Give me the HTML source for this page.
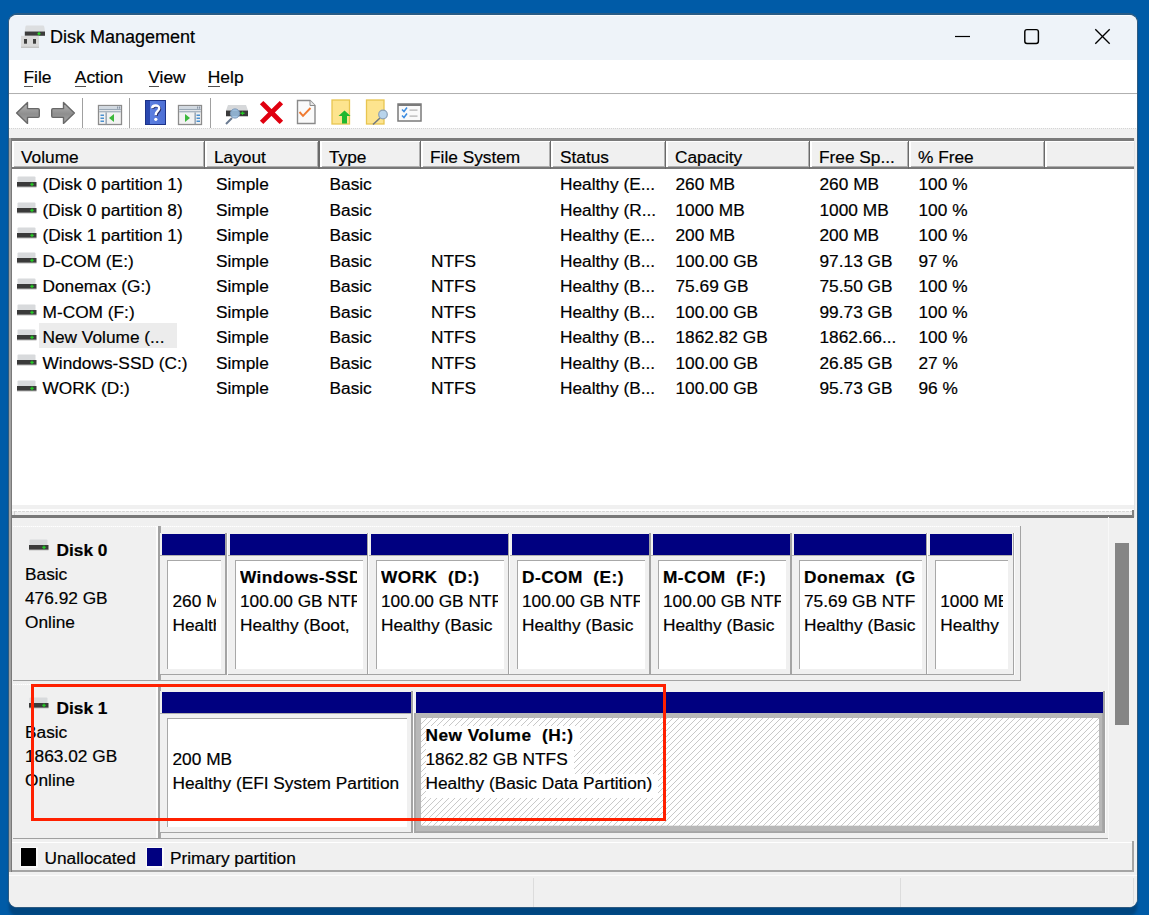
<!DOCTYPE html>
<html><head><meta charset="utf-8"><style>
html,body{margin:0;padding:0;width:1149px;height:915px;overflow:hidden}
body{background:#005ba7;position:relative;font-family:"Liberation Sans", sans-serif}
#win{position:absolute;left:8px;top:13px;width:1128px;height:892px;border:1px solid #2e5a80;border-top:2px solid #2a5c86;border-radius:9px;background:#f0f0f0;box-shadow:0 9px 3px -1px rgba(0,0,0,0.23)}
.t{position:absolute;white-space:nowrap;line-height:1;-webkit-text-stroke:0.2px #000}
</style></head><body>
<div id="win"></div>
<div style="position:absolute;left:9px;top:15px;width:1128px;height:45px;background:linear-gradient(#fbfdff 0 1px,#eef3f9 1px);border-radius:8px 8px 0 0"></div>
<div style="position:absolute;left:9px;top:60px;width:1128px;height:33px;background:#fff"></div>
<div style="position:absolute;left:9px;top:93.2px;width:1128px;height:1.4px;background:#b0b0b0"></div>
<div style="position:absolute;left:9px;top:94px;width:1128px;height:1px;background:#fdfdfd"></div>
<div style="position:absolute;left:9px;top:95px;width:1128px;height:33px;background:#fff"></div>
<div style="position:absolute;left:9px;top:128px;width:1128px;height:1px;background:repeating-linear-gradient(90deg,#d4d4d4 0 1px,#f4f4f4 1px 2px)"></div>
<svg style="position:absolute;left:20px;top:24px" width="27" height="26" viewBox="0 0 27 26"><path d="M6.5 1.6 H23 Q24 1.6 24.3 3 L25 7.6 H4.8 L5.4 3 Q5.6 1.6 6.5 1.6 Z" fill="#dcdee0"/><rect x="4.8" y="7.5" width="20.2" height="4.3" fill="#3c3c3c"/><rect x="17.5" y="9" width="3" height="1.4" fill="#2ad82a"/><rect x="18.4" y="8" width="1.2" height="3.4" fill="#2ad82a"/><rect x="1" y="11.8" width="18" height="12.2" fill="#dadada"/><rect x="1" y="22.6" width="18" height="1.4" fill="#c4c4c4"/><rect x="4" y="15" width="3" height="4.7" fill="#404040"/><rect x="13" y="15" width="3" height="4.7" fill="#404040"/></svg>
<div class="t" style="left:50px;top:28.26px;font-size:18px;font-weight:400;color:#000;">Disk Management</div>
<svg style="position:absolute;left:950px;top:25px" width="170" height="24" viewBox="0 0 170 24"><line x1="5" y1="11.5" x2="20" y2="11.5" stroke="#000" stroke-width="1.2"/><rect x="74.8" y="4.6" width="13.6" height="13.8" rx="2.2" fill="none" stroke="#000" stroke-width="1.45"/><line x1="145.3" y1="4.3" x2="159.7" y2="18.7" stroke="#000" stroke-width="1.3"/><line x1="159.7" y1="4.3" x2="145.3" y2="18.7" stroke="#000" stroke-width="1.3"/></svg>
<div class="t" style="left:23.5px;top:69.27px;font-size:17.4px;font-weight:400;color:#000;">File</div>
<div style="position:absolute;left:24.0px;top:85.6px;width:8.5px;height:1.4px;background:#505050"></div>
<div class="t" style="left:74.8px;top:69.27px;font-size:17.4px;font-weight:400;color:#000;">Action</div>
<div style="position:absolute;left:75.3px;top:85.6px;width:10.5px;height:1.4px;background:#505050"></div>
<div class="t" style="left:148.3px;top:69.27px;font-size:17.4px;font-weight:400;color:#000;">View</div>
<div style="position:absolute;left:148.8px;top:85.6px;width:10.5px;height:1.4px;background:#505050"></div>
<div class="t" style="left:207.8px;top:69.27px;font-size:17.4px;font-weight:400;color:#000;">Help</div>
<div style="position:absolute;left:208.3px;top:85.6px;width:11.5px;height:1.4px;background:#505050"></div>
<svg style="position:absolute;left:14px;top:100px" width="28" height="26" viewBox="0 0 28 26"><defs><linearGradient id="ag" x1="0" y1="0" x2="0" y2="1"><stop offset="0" stop-color="#b8b8b8"/><stop offset="0.55" stop-color="#8e8e8e"/><stop offset="1" stop-color="#a8a8a8"/></linearGradient><linearGradient id="bk" x1="0" y1="0" x2="1" y2="0"><stop offset="0" stop-color="#2a48b0"/><stop offset="0.22" stop-color="#2a48b0"/><stop offset="0.25" stop-color="#5b7fe0"/><stop offset="1" stop-color="#4c6ed4"/></linearGradient></defs><path d="M2.6 13 L13.5 2.6 V8.6 H24 Q25.3 8.6 25.3 10 V16 Q25.3 17.4 24 17.4 H13.5 V23.4 Z" fill="url(#ag)" stroke="#686868" stroke-width="1.4" stroke-linejoin="round"/></svg>
<svg style="position:absolute;left:49px;top:100px" width="28" height="26" viewBox="0 0 28 26"><path d="M25.4 13 L14.5 2.6 V8.6 H4 Q2.7 8.6 2.7 10 V16 Q2.7 17.4 4 17.4 H14.5 V23.4 Z" fill="url(#ag)" stroke="#686868" stroke-width="1.4" stroke-linejoin="round"/></svg>
<div style="position:absolute;left:82px;top:98px;width:1.2px;height:30px;background:#a0a0a0"></div>
<div style="position:absolute;left:129px;top:98px;width:1.2px;height:30px;background:#a0a0a0"></div>
<div style="position:absolute;left:210px;top:98px;width:1.2px;height:30px;background:#a0a0a0"></div>
<svg style="position:absolute;left:97px;top:104px" width="26" height="22" viewBox="0 0 26 22"><rect x="1.5" y="1.5" width="23" height="19" fill="#f2f2f2" stroke="#8c8c8c" stroke-width="1.3"/><rect x="2.2" y="2.2" width="21.6" height="3" fill="#d0d8e0"/><rect x="2.2" y="5" width="21.6" height="1" fill="#9aa8b6"/><rect x="20" y="2.5" width="1.2" height="2.2" fill="#8a98a8"/><rect x="22" y="2.5" width="1.2" height="2.2" fill="#8a98a8"/><rect x="2.2" y="6.8" width="21.6" height="1.6" fill="#a8b4c0"/><rect x="8.5" y="8.4" width="1.3" height="12" fill="#8898a8"/><rect x="3.5" y="10.5" width="3.5" height="1.5" fill="#4a90d0"/><rect x="3.5" y="13.5" width="3.5" height="1.5" fill="#4a90d0"/><rect x="3.5" y="16.5" width="3.5" height="1.5" fill="#4a90d0"/><path d="M12 14 L17 10 V18 Z" fill="#3cb83c"/></svg>
<svg style="position:absolute;left:145px;top:100px" width="21" height="25" viewBox="0 0 21 25"><defs><linearGradient id="ag" x1="0" y1="0" x2="0" y2="1"><stop offset="0" stop-color="#b8b8b8"/><stop offset="0.55" stop-color="#8e8e8e"/><stop offset="1" stop-color="#a8a8a8"/></linearGradient><linearGradient id="bk" x1="0" y1="0" x2="1" y2="0"><stop offset="0" stop-color="#2a48b0"/><stop offset="0.22" stop-color="#2a48b0"/><stop offset="0.25" stop-color="#5b7fe0"/><stop offset="1" stop-color="#4c6ed4"/></linearGradient></defs><rect x="0.5" y="0.5" width="20" height="24" fill="url(#bk)" stroke="#1c3288" stroke-width="1"/><path d="M7.2 8.2 C7.2 4.6 14.2 4.4 14.2 8.3 C14.2 11 10.8 11.3 10.8 14.2 V15.2" fill="none" stroke="#28306a" stroke-width="2.6" transform="translate(0.8,0.8)"/><path d="M7.2 8.2 C7.2 4.6 14.2 4.4 14.2 8.3 C14.2 11 10.8 11.3 10.8 14.2 V15.2" fill="none" stroke="#ffffff" stroke-width="2.4"/><circle cx="10.8" cy="19.3" r="1.6" fill="#fff"/></svg>
<svg style="position:absolute;left:177px;top:104px" width="26" height="22" viewBox="0 0 26 22"><rect x="1.5" y="1.5" width="23" height="19" fill="#f2f2f2" stroke="#8c8c8c" stroke-width="1.3"/><rect x="2.2" y="2.2" width="21.6" height="3" fill="#d0d8e0"/><rect x="2.2" y="5" width="21.6" height="1" fill="#9aa8b6"/><rect x="20" y="2.5" width="1.2" height="2.2" fill="#8a98a8"/><rect x="22" y="2.5" width="1.2" height="2.2" fill="#8a98a8"/><rect x="2.2" y="6.8" width="21.6" height="1.6" fill="#a8b4c0"/><rect x="17.5" y="8.4" width="1.3" height="12" fill="#8898a8"/><rect x="19.5" y="10.5" width="3.5" height="1.5" fill="#4a90d0"/><rect x="19.5" y="13.5" width="3.5" height="1.5" fill="#4a90d0"/><rect x="19.5" y="16.5" width="3.5" height="1.5" fill="#4a90d0"/><path d="M13 14 L8 10 V18 Z" fill="#3cb83c"/></svg>
<svg style="position:absolute;left:224px;top:103px" width="25" height="23" viewBox="0 0 25 23"><path d="M4 2 H22 L24 7.5 H2 Z" fill="#d6d8da"/><rect x="2" y="7.5" width="22" height="5.5" fill="#3a3a3a"/><rect x="2" y="13" width="22" height="1" fill="#c8c8c8"/><rect x="16.5" y="9.5" width="4" height="1.5" fill="#22cc22"/><rect x="18" y="8.5" width="1" height="3.5" fill="#22cc22"/><line x1="8" y1="15" x2="2" y2="21" stroke="#6a7a90" stroke-width="2"/><circle cx="11" cy="10.5" r="4.6" fill="#9ec4e8" fill-opacity="0.85" stroke="#7896b8" stroke-width="1"/></svg>
<svg style="position:absolute;left:259px;top:100px" width="25" height="25" viewBox="0 0 25 25"><path d="M4.3 4.3 L20.7 20.7 M20.7 4.3 L4.3 20.7" stroke="#e0000f" stroke-width="4.8" stroke-linecap="square"/></svg>
<svg style="position:absolute;left:296px;top:99px" width="21" height="27" viewBox="0 0 21 27"><path d="M1.5 1.5 H14 L19 6.5 V24.5 H1.5 Z" fill="#fafafa" stroke="#8a8a8a" stroke-width="1.4"/><path d="M14 1.5 V6.5 H19" fill="#e8e8e8" stroke="#8a8a8a" stroke-width="1"/><path d="M3.5 13 L7 16.8 L14.5 9" fill="none" stroke="#f07a30" stroke-width="1.9"/></svg>
<svg style="position:absolute;left:331px;top:99px" width="22" height="27" viewBox="0 0 22 27"><rect x="1" y="1" width="17.5" height="24" fill="#fde48e" stroke="#e8c550" stroke-width="1.3"/><path d="M13.5 11.5 L19.5 17 H16 V24.5 H11 V17 H7.5 Z" fill="#20b830"/></svg>
<svg style="position:absolute;left:365px;top:99px" width="24" height="27" viewBox="0 0 24 27"><rect x="1.5" y="1" width="17.5" height="24" fill="#fde48e" stroke="#e8c550" stroke-width="1.3"/><line x1="15" y1="19" x2="8" y2="25.5" stroke="#707880" stroke-width="1.6"/><circle cx="18" cy="15.5" r="4.3" fill="#b8d4ec" stroke="#8aa0b8" stroke-width="1.2"/></svg>
<svg style="position:absolute;left:397px;top:103px" width="25" height="19" viewBox="0 0 25 19"><rect x="1" y="1" width="23" height="17" fill="#fafafa" stroke="#7a7a7a" stroke-width="1.5"/><rect x="1" y="1" width="23" height="2" fill="#7a7a7a"/><path d="M5 6.5 L7 8.5 L10 4.5" fill="none" stroke="#3c8ce0" stroke-width="1.5"/><path d="M5 12.5 L7 14.5 L10 10.5" fill="none" stroke="#3c8ce0" stroke-width="1.5"/><rect x="12.5" y="6.5" width="8" height="1.2" fill="#b0b0b0"/><rect x="12.5" y="12.5" width="8" height="1.2" fill="#b0b0b0"/></svg>
<div style="position:absolute;left:9px;top:138px;width:1125px;height:379px;background:#fff"></div>
<div style="position:absolute;left:9px;top:138px;width:1125px;height:2.5px;background:#7a7a7a"></div>
<div style="position:absolute;left:9px;top:138px;width:1.5px;height:379px;background:#a0a0a0"></div>
<div style="position:absolute;left:10.5px;top:139px;width:1.5px;height:378px;background:#6e6e6e"></div>
<div style="position:absolute;left:1134px;top:138px;width:1px;height:379px;background:#e4e4e4"></div>
<div style="position:absolute;left:12px;top:140.5px;width:1122px;height:28px;background:#f0f0f0"></div>
<div style="position:absolute;left:12px;top:140.5px;width:1122px;height:1px;background:#fff"></div>
<div style="position:absolute;left:12px;top:165.5px;width:1122px;height:1.5px;background:#b0b0b0"></div>
<div style="position:absolute;left:12px;top:167px;width:1122px;height:1.8px;background:#787878"></div>
<div style="position:absolute;left:12px;top:140.5px;width:2px;height:26px;background:#fff"></div>
<div style="position:absolute;left:202.5px;top:141.5px;width:1px;height:25px;background:#b0b0b0"></div>
<div style="position:absolute;left:203.5px;top:140.5px;width:1.6px;height:28px;background:#6a6a6a"></div>
<div class="t" style="left:21px;top:148.76px;font-size:17.3px;font-weight:400;color:#000;">Volume</div>
<div style="position:absolute;left:205px;top:140.5px;width:2px;height:26px;background:#fff"></div>
<div style="position:absolute;left:317px;top:141.5px;width:1px;height:25px;background:#b0b0b0"></div>
<div style="position:absolute;left:318px;top:140.5px;width:1.6px;height:28px;background:#6a6a6a"></div>
<div class="t" style="left:214px;top:148.76px;font-size:17.3px;font-weight:400;color:#000;">Layout</div>
<div style="position:absolute;left:320px;top:140.5px;width:2px;height:26px;background:#fff"></div>
<div style="position:absolute;left:418.5px;top:141.5px;width:1px;height:25px;background:#b0b0b0"></div>
<div style="position:absolute;left:419.5px;top:140.5px;width:1.6px;height:28px;background:#6a6a6a"></div>
<div class="t" style="left:329px;top:148.76px;font-size:17.3px;font-weight:400;color:#000;">Type</div>
<div style="position:absolute;left:421px;top:140.5px;width:2px;height:26px;background:#fff"></div>
<div style="position:absolute;left:548.5px;top:141.5px;width:1px;height:25px;background:#b0b0b0"></div>
<div style="position:absolute;left:549.5px;top:140.5px;width:1.6px;height:28px;background:#6a6a6a"></div>
<div class="t" style="left:430px;top:148.76px;font-size:17.3px;font-weight:400;color:#000;">File System</div>
<div style="position:absolute;left:551px;top:140.5px;width:2px;height:26px;background:#fff"></div>
<div style="position:absolute;left:663.5px;top:141.5px;width:1px;height:25px;background:#b0b0b0"></div>
<div style="position:absolute;left:664.5px;top:140.5px;width:1.6px;height:28px;background:#6a6a6a"></div>
<div class="t" style="left:560px;top:148.76px;font-size:17.3px;font-weight:400;color:#000;">Status</div>
<div style="position:absolute;left:666px;top:140.5px;width:2px;height:26px;background:#fff"></div>
<div style="position:absolute;left:807.5px;top:141.5px;width:1px;height:25px;background:#b0b0b0"></div>
<div style="position:absolute;left:808.5px;top:140.5px;width:1.6px;height:28px;background:#6a6a6a"></div>
<div class="t" style="left:675px;top:148.76px;font-size:17.3px;font-weight:400;color:#000;">Capacity</div>
<div style="position:absolute;left:810px;top:140.5px;width:2px;height:26px;background:#fff"></div>
<div style="position:absolute;left:906.5px;top:141.5px;width:1px;height:25px;background:#b0b0b0"></div>
<div style="position:absolute;left:907.5px;top:140.5px;width:1.6px;height:28px;background:#6a6a6a"></div>
<div class="t" style="left:819px;top:148.76px;font-size:17.3px;font-weight:400;color:#000;">Free Sp...</div>
<div style="position:absolute;left:909px;top:140.5px;width:2px;height:26px;background:#fff"></div>
<div style="position:absolute;left:1042.5px;top:141.5px;width:1px;height:25px;background:#b0b0b0"></div>
<div style="position:absolute;left:1043.5px;top:140.5px;width:1.6px;height:28px;background:#6a6a6a"></div>
<div class="t" style="left:918px;top:148.76px;font-size:17.3px;font-weight:400;color:#000;">% Free</div>
<div style="position:absolute;left:1045px;top:140.5px;width:2px;height:26px;background:#fff"></div>
<svg style="position:absolute;left:16px;top:176px" width="22" height="14" viewBox="0 0 22 14"><rect x="1.5" y="0.5" width="18" height="6" rx="1" fill="#d8dadc"/><rect x="1" y="6" width="19.5" height="4.8" fill="#3a3a3a"/><rect x="1" y="10.8" width="19.5" height="1" fill="#d4d4d4"/><rect x="14.3" y="7.7" width="3.4" height="1.4" fill="#22cc22"/><rect x="15.4" y="6.6" width="1.2" height="3.7" fill="#22cc22"/></svg>
<div class="t" style="left:42.5px;top:176.36px;font-size:17.3px;font-weight:400;color:#000;">(Disk 0 partition 1)</div>
<div class="t" style="left:216px;top:176.36px;font-size:17.3px;font-weight:400;color:#000;">Simple</div>
<div class="t" style="left:329.5px;top:176.36px;font-size:17.3px;font-weight:400;color:#000;">Basic</div>
<div class="t" style="left:560px;top:176.36px;font-size:17.3px;font-weight:400;color:#000;">Healthy (E...</div>
<div class="t" style="left:675.5px;top:176.36px;font-size:17.3px;font-weight:400;color:#000;">260 MB</div>
<div class="t" style="left:819.5px;top:176.36px;font-size:17.3px;font-weight:400;color:#000;">260 MB</div>
<div class="t" style="left:918.5px;top:176.36px;font-size:17.3px;font-weight:400;color:#000;">100 %</div>
<svg style="position:absolute;left:16px;top:202px" width="22" height="14" viewBox="0 0 22 14"><rect x="1.5" y="0.5" width="18" height="6" rx="1" fill="#d8dadc"/><rect x="1" y="6" width="19.5" height="4.8" fill="#3a3a3a"/><rect x="1" y="10.8" width="19.5" height="1" fill="#d4d4d4"/><rect x="14.3" y="7.7" width="3.4" height="1.4" fill="#22cc22"/><rect x="15.4" y="6.6" width="1.2" height="3.7" fill="#22cc22"/></svg>
<div class="t" style="left:42.5px;top:201.86px;font-size:17.3px;font-weight:400;color:#000;">(Disk 0 partition 8)</div>
<div class="t" style="left:216px;top:201.86px;font-size:17.3px;font-weight:400;color:#000;">Simple</div>
<div class="t" style="left:329.5px;top:201.86px;font-size:17.3px;font-weight:400;color:#000;">Basic</div>
<div class="t" style="left:560px;top:201.86px;font-size:17.3px;font-weight:400;color:#000;">Healthy (R...</div>
<div class="t" style="left:675.5px;top:201.86px;font-size:17.3px;font-weight:400;color:#000;">1000 MB</div>
<div class="t" style="left:819.5px;top:201.86px;font-size:17.3px;font-weight:400;color:#000;">1000 MB</div>
<div class="t" style="left:918.5px;top:201.86px;font-size:17.3px;font-weight:400;color:#000;">100 %</div>
<svg style="position:absolute;left:16px;top:227px" width="22" height="14" viewBox="0 0 22 14"><rect x="1.5" y="0.5" width="18" height="6" rx="1" fill="#d8dadc"/><rect x="1" y="6" width="19.5" height="4.8" fill="#3a3a3a"/><rect x="1" y="10.8" width="19.5" height="1" fill="#d4d4d4"/><rect x="14.3" y="7.7" width="3.4" height="1.4" fill="#22cc22"/><rect x="15.4" y="6.6" width="1.2" height="3.7" fill="#22cc22"/></svg>
<div class="t" style="left:42.5px;top:227.36px;font-size:17.3px;font-weight:400;color:#000;">(Disk 1 partition 1)</div>
<div class="t" style="left:216px;top:227.36px;font-size:17.3px;font-weight:400;color:#000;">Simple</div>
<div class="t" style="left:329.5px;top:227.36px;font-size:17.3px;font-weight:400;color:#000;">Basic</div>
<div class="t" style="left:560px;top:227.36px;font-size:17.3px;font-weight:400;color:#000;">Healthy (E...</div>
<div class="t" style="left:675.5px;top:227.36px;font-size:17.3px;font-weight:400;color:#000;">200 MB</div>
<div class="t" style="left:819.5px;top:227.36px;font-size:17.3px;font-weight:400;color:#000;">200 MB</div>
<div class="t" style="left:918.5px;top:227.36px;font-size:17.3px;font-weight:400;color:#000;">100 %</div>
<svg style="position:absolute;left:16px;top:252px" width="22" height="14" viewBox="0 0 22 14"><rect x="1.5" y="0.5" width="18" height="6" rx="1" fill="#d8dadc"/><rect x="1" y="6" width="19.5" height="4.8" fill="#3a3a3a"/><rect x="1" y="10.8" width="19.5" height="1" fill="#d4d4d4"/><rect x="14.3" y="7.7" width="3.4" height="1.4" fill="#22cc22"/><rect x="15.4" y="6.6" width="1.2" height="3.7" fill="#22cc22"/></svg>
<div class="t" style="left:42.5px;top:252.86px;font-size:17.3px;font-weight:400;color:#000;">D-COM (E:)</div>
<div class="t" style="left:216px;top:252.86px;font-size:17.3px;font-weight:400;color:#000;">Simple</div>
<div class="t" style="left:329.5px;top:252.86px;font-size:17.3px;font-weight:400;color:#000;">Basic</div>
<div class="t" style="left:431px;top:252.86px;font-size:17.3px;font-weight:400;color:#000;">NTFS</div>
<div class="t" style="left:560px;top:252.86px;font-size:17.3px;font-weight:400;color:#000;">Healthy (B...</div>
<div class="t" style="left:675.5px;top:252.86px;font-size:17.3px;font-weight:400;color:#000;">100.00 GB</div>
<div class="t" style="left:819.5px;top:252.86px;font-size:17.3px;font-weight:400;color:#000;">97.13 GB</div>
<div class="t" style="left:918.5px;top:252.86px;font-size:17.3px;font-weight:400;color:#000;">97 %</div>
<svg style="position:absolute;left:16px;top:278px" width="22" height="14" viewBox="0 0 22 14"><rect x="1.5" y="0.5" width="18" height="6" rx="1" fill="#d8dadc"/><rect x="1" y="6" width="19.5" height="4.8" fill="#3a3a3a"/><rect x="1" y="10.8" width="19.5" height="1" fill="#d4d4d4"/><rect x="14.3" y="7.7" width="3.4" height="1.4" fill="#22cc22"/><rect x="15.4" y="6.6" width="1.2" height="3.7" fill="#22cc22"/></svg>
<div class="t" style="left:42.5px;top:278.36px;font-size:17.3px;font-weight:400;color:#000;">Donemax (G:)</div>
<div class="t" style="left:216px;top:278.36px;font-size:17.3px;font-weight:400;color:#000;">Simple</div>
<div class="t" style="left:329.5px;top:278.36px;font-size:17.3px;font-weight:400;color:#000;">Basic</div>
<div class="t" style="left:431px;top:278.36px;font-size:17.3px;font-weight:400;color:#000;">NTFS</div>
<div class="t" style="left:560px;top:278.36px;font-size:17.3px;font-weight:400;color:#000;">Healthy (B...</div>
<div class="t" style="left:675.5px;top:278.36px;font-size:17.3px;font-weight:400;color:#000;">75.69 GB</div>
<div class="t" style="left:819.5px;top:278.36px;font-size:17.3px;font-weight:400;color:#000;">75.50 GB</div>
<div class="t" style="left:918.5px;top:278.36px;font-size:17.3px;font-weight:400;color:#000;">100 %</div>
<svg style="position:absolute;left:16px;top:304px" width="22" height="14" viewBox="0 0 22 14"><rect x="1.5" y="0.5" width="18" height="6" rx="1" fill="#d8dadc"/><rect x="1" y="6" width="19.5" height="4.8" fill="#3a3a3a"/><rect x="1" y="10.8" width="19.5" height="1" fill="#d4d4d4"/><rect x="14.3" y="7.7" width="3.4" height="1.4" fill="#22cc22"/><rect x="15.4" y="6.6" width="1.2" height="3.7" fill="#22cc22"/></svg>
<div class="t" style="left:42.5px;top:303.86px;font-size:17.3px;font-weight:400;color:#000;">M-COM (F:)</div>
<div class="t" style="left:216px;top:303.86px;font-size:17.3px;font-weight:400;color:#000;">Simple</div>
<div class="t" style="left:329.5px;top:303.86px;font-size:17.3px;font-weight:400;color:#000;">Basic</div>
<div class="t" style="left:431px;top:303.86px;font-size:17.3px;font-weight:400;color:#000;">NTFS</div>
<div class="t" style="left:560px;top:303.86px;font-size:17.3px;font-weight:400;color:#000;">Healthy (B...</div>
<div class="t" style="left:675.5px;top:303.86px;font-size:17.3px;font-weight:400;color:#000;">100.00 GB</div>
<div class="t" style="left:819.5px;top:303.86px;font-size:17.3px;font-weight:400;color:#000;">99.73 GB</div>
<div class="t" style="left:918.5px;top:303.86px;font-size:17.3px;font-weight:400;color:#000;">100 %</div>
<svg style="position:absolute;left:16px;top:329px" width="22" height="14" viewBox="0 0 22 14"><rect x="1.5" y="0.5" width="18" height="6" rx="1" fill="#d8dadc"/><rect x="1" y="6" width="19.5" height="4.8" fill="#3a3a3a"/><rect x="1" y="10.8" width="19.5" height="1" fill="#d4d4d4"/><rect x="14.3" y="7.7" width="3.4" height="1.4" fill="#22cc22"/><rect x="15.4" y="6.6" width="1.2" height="3.7" fill="#22cc22"/></svg>
<div style="position:absolute;left:39px;top:323px;width:137.5px;height:25px;background:#ececec"></div>
<div class="t" style="left:42.5px;top:329.36px;font-size:17.3px;font-weight:400;color:#000;">New Volume (...</div>
<div class="t" style="left:216px;top:329.36px;font-size:17.3px;font-weight:400;color:#000;">Simple</div>
<div class="t" style="left:329.5px;top:329.36px;font-size:17.3px;font-weight:400;color:#000;">Basic</div>
<div class="t" style="left:431px;top:329.36px;font-size:17.3px;font-weight:400;color:#000;">NTFS</div>
<div class="t" style="left:560px;top:329.36px;font-size:17.3px;font-weight:400;color:#000;">Healthy (B...</div>
<div class="t" style="left:675.5px;top:329.36px;font-size:17.3px;font-weight:400;color:#000;">1862.82 GB</div>
<div class="t" style="left:819.5px;top:329.36px;font-size:17.3px;font-weight:400;color:#000;">1862.66...</div>
<div class="t" style="left:918.5px;top:329.36px;font-size:17.3px;font-weight:400;color:#000;">100 %</div>
<svg style="position:absolute;left:16px;top:354px" width="22" height="14" viewBox="0 0 22 14"><rect x="1.5" y="0.5" width="18" height="6" rx="1" fill="#d8dadc"/><rect x="1" y="6" width="19.5" height="4.8" fill="#3a3a3a"/><rect x="1" y="10.8" width="19.5" height="1" fill="#d4d4d4"/><rect x="14.3" y="7.7" width="3.4" height="1.4" fill="#22cc22"/><rect x="15.4" y="6.6" width="1.2" height="3.7" fill="#22cc22"/></svg>
<div class="t" style="left:42.5px;top:354.86px;font-size:17.3px;font-weight:400;color:#000;">Windows-SSD (C:)</div>
<div class="t" style="left:216px;top:354.86px;font-size:17.3px;font-weight:400;color:#000;">Simple</div>
<div class="t" style="left:329.5px;top:354.86px;font-size:17.3px;font-weight:400;color:#000;">Basic</div>
<div class="t" style="left:431px;top:354.86px;font-size:17.3px;font-weight:400;color:#000;">NTFS</div>
<div class="t" style="left:560px;top:354.86px;font-size:17.3px;font-weight:400;color:#000;">Healthy (B...</div>
<div class="t" style="left:675.5px;top:354.86px;font-size:17.3px;font-weight:400;color:#000;">100.00 GB</div>
<div class="t" style="left:819.5px;top:354.86px;font-size:17.3px;font-weight:400;color:#000;">26.85 GB</div>
<div class="t" style="left:918.5px;top:354.86px;font-size:17.3px;font-weight:400;color:#000;">27 %</div>
<svg style="position:absolute;left:16px;top:380px" width="22" height="14" viewBox="0 0 22 14"><rect x="1.5" y="0.5" width="18" height="6" rx="1" fill="#d8dadc"/><rect x="1" y="6" width="19.5" height="4.8" fill="#3a3a3a"/><rect x="1" y="10.8" width="19.5" height="1" fill="#d4d4d4"/><rect x="14.3" y="7.7" width="3.4" height="1.4" fill="#22cc22"/><rect x="15.4" y="6.6" width="1.2" height="3.7" fill="#22cc22"/></svg>
<div class="t" style="left:42.5px;top:380.36px;font-size:17.3px;font-weight:400;color:#000;">WORK (D:)</div>
<div class="t" style="left:216px;top:380.36px;font-size:17.3px;font-weight:400;color:#000;">Simple</div>
<div class="t" style="left:329.5px;top:380.36px;font-size:17.3px;font-weight:400;color:#000;">Basic</div>
<div class="t" style="left:431px;top:380.36px;font-size:17.3px;font-weight:400;color:#000;">NTFS</div>
<div class="t" style="left:560px;top:380.36px;font-size:17.3px;font-weight:400;color:#000;">Healthy (B...</div>
<div class="t" style="left:675.5px;top:380.36px;font-size:17.3px;font-weight:400;color:#000;">100.00 GB</div>
<div class="t" style="left:819.5px;top:380.36px;font-size:17.3px;font-weight:400;color:#000;">95.73 GB</div>
<div class="t" style="left:918.5px;top:380.36px;font-size:17.3px;font-weight:400;color:#000;">96 %</div>
<div style="position:absolute;left:12px;top:505.4px;width:1122px;height:4px;background:#f0f0f0"></div>
<div style="position:absolute;left:12px;top:509.3px;width:1122px;height:1.2px;background:#fdfdfd"></div>
<div style="position:absolute;left:12px;top:510.5px;width:1122px;height:5px;background:#f0f0f0"></div>
<div style="position:absolute;left:14px;top:511px;width:1120px;height:1px;background:repeating-linear-gradient(90deg,#d8d8d8 0 3px,#f4f4f4 3px 4px)"></div>
<div style="position:absolute;left:14px;top:511px;width:1px;height:4.5px;background:#d0d0d0"></div>
<div style="position:absolute;left:9px;top:515.3px;width:1125px;height:2.6px;background:#787878"></div>
<div style="position:absolute;left:1131.5px;top:510px;width:2.5px;height:6px;background:#808080"></div>
<div style="position:absolute;left:9px;top:518px;width:1125px;height:354px;background:#f0f0f0"></div>
<div style="position:absolute;left:9px;top:138px;width:1.5px;height:734px;background:#a0a0a0"></div>
<div style="position:absolute;left:10.5px;top:139px;width:1.5px;height:733px;background:#7a7a7a"></div>
<div style="position:absolute;left:1108px;top:517px;width:1px;height:324px;background:#f8f8f8"></div>
<div style="position:absolute;left:13px;top:526px;width:144px;height:1px;background:repeating-linear-gradient(90deg,#fff 0 1px,#f6f6f6 1px 2px)"></div>
<div style="position:absolute;left:155.5px;top:526px;width:2px;height:154px;background:#fcfcfc"></div>
<div style="position:absolute;left:158px;top:526px;width:1.5px;height:155px;background:#a0a0a0"></div>
<div style="position:absolute;left:13px;top:679.5px;width:146px;height:1.5px;background:#a0a0a0"></div>
<svg style="position:absolute;left:28px;top:539px" width="22" height="14" viewBox="0 0 22 14"><rect x="1.5" y="0.5" width="18" height="6" rx="1" fill="#d8dadc"/><rect x="1" y="6" width="19.5" height="4.8" fill="#3a3a3a"/><rect x="1" y="10.8" width="19.5" height="1" fill="#d4d4d4"/><rect x="14.3" y="7.7" width="3.4" height="1.4" fill="#22cc22"/><rect x="15.4" y="6.6" width="1.2" height="3.7" fill="#22cc22"/></svg>
<div class="t" style="left:56.5px;top:542.36px;font-size:17.3px;font-weight:700;color:#000;">Disk 0</div>
<div class="t" style="left:25px;top:566.36px;font-size:17.3px;font-weight:400;color:#000;">Basic</div>
<div class="t" style="left:25px;top:590.36px;font-size:17.3px;font-weight:400;color:#000;">476.92 GB</div>
<div class="t" style="left:25px;top:614.36px;font-size:17.3px;font-weight:400;color:#000;">Online</div>
<div style="position:absolute;left:13px;top:684px;width:144px;height:1px;background:repeating-linear-gradient(90deg,#fff 0 1px,#f6f6f6 1px 2px)"></div>
<div style="position:absolute;left:155.5px;top:684px;width:2px;height:154px;background:#fcfcfc"></div>
<div style="position:absolute;left:158px;top:684px;width:1.5px;height:155px;background:#a0a0a0"></div>
<div style="position:absolute;left:13px;top:837.5px;width:146px;height:1.5px;background:#a0a0a0"></div>
<svg style="position:absolute;left:28px;top:697px" width="22" height="14" viewBox="0 0 22 14"><rect x="1.5" y="0.5" width="18" height="6" rx="1" fill="#d8dadc"/><rect x="1" y="6" width="19.5" height="4.8" fill="#3a3a3a"/><rect x="1" y="10.8" width="19.5" height="1" fill="#d4d4d4"/><rect x="14.3" y="7.7" width="3.4" height="1.4" fill="#22cc22"/><rect x="15.4" y="6.6" width="1.2" height="3.7" fill="#22cc22"/></svg>
<div class="t" style="left:56.5px;top:700.36px;font-size:17.3px;font-weight:700;color:#000;">Disk 1</div>
<div class="t" style="left:25px;top:724.36px;font-size:17.3px;font-weight:400;color:#000;">Basic</div>
<div class="t" style="left:25px;top:748.36px;font-size:17.3px;font-weight:400;color:#000;">1863.02 GB</div>
<div class="t" style="left:25px;top:772.36px;font-size:17.3px;font-weight:400;color:#000;">Online</div>
<div style="position:absolute;left:160px;top:526px;width:861px;height:1px;background:repeating-linear-gradient(90deg,#fff 0 1px,#f6f6f6 1px 2px)"></div>
<div style="position:absolute;left:159.5px;top:526px;width:1.5px;height:155px;background:#a8a8a8"></div>
<div style="position:absolute;left:1019.5px;top:526px;width:1.5px;height:155px;background:#a4a4a4"></div>
<div style="position:absolute;left:160px;top:679.5px;width:861px;height:1.5px;background:#a4a4a4"></div>
<div style="position:absolute;left:160px;top:533px;width:67px;height:142px;background:#f0f0f0"></div>
<div style="position:absolute;left:162px;top:534px;width:63px;height:21px;background:#000080"></div>
<div style="position:absolute;left:160px;top:555px;width:65px;height:1.2px;background:#b0b0b0"></div>
<div style="position:absolute;left:225px;top:533px;width:1.6px;height:142px;background:#a4a4a4"></div>
<div style="position:absolute;left:226.6px;top:533px;width:1px;height:142px;background:#fcfcfc"></div>
<div style="position:absolute;left:160px;top:674px;width:67px;height:1.2px;background:#a4a4a4"></div>
<div style="position:absolute;left:167px;top:560px;width:54px;height:109px;background:#fff"></div>
<div style="position:absolute;left:167px;top:560px;width:54px;height:1.2px;background:#a8a8a8"></div>
<div style="position:absolute;left:167px;top:560px;width:1.2px;height:109px;background:#a8a8a8"></div>
<div style="position:absolute;left:172.5px;top:560px;width:43.0px;height:109px;overflow:hidden"><div class="t" style="left:0;top:32.66px;font-size:17.3px;font-weight:400;">260 MB</div></div>
<div style="position:absolute;left:172.5px;top:560px;width:43.0px;height:109px;overflow:hidden"><div class="t" style="left:0;top:56.66px;font-size:17.3px;font-weight:400;">Healthy (EFI System Partition)</div></div>
<div style="position:absolute;left:227.5px;top:533px;width:141.0px;height:142px;background:#f0f0f0"></div>
<div style="position:absolute;left:229.5px;top:534px;width:137.0px;height:21px;background:#000080"></div>
<div style="position:absolute;left:227.5px;top:555px;width:139.0px;height:1.2px;background:#b0b0b0"></div>
<div style="position:absolute;left:366.5px;top:533px;width:1.6px;height:142px;background:#a4a4a4"></div>
<div style="position:absolute;left:368.1px;top:533px;width:1px;height:142px;background:#fcfcfc"></div>
<div style="position:absolute;left:227.5px;top:674px;width:141.0px;height:1.2px;background:#a4a4a4"></div>
<div style="position:absolute;left:234.5px;top:560px;width:128.0px;height:109px;background:#fff"></div>
<div style="position:absolute;left:234.5px;top:560px;width:128.0px;height:1.2px;background:#a8a8a8"></div>
<div style="position:absolute;left:234.5px;top:560px;width:1.2px;height:109px;background:#a8a8a8"></div>
<div style="position:absolute;left:240.0px;top:560px;width:117.0px;height:109px;overflow:hidden"><div class="t" style="left:0;top:8.66px;font-size:17.3px;font-weight:700;letter-spacing:0.45px;">Windows-SSD&nbsp; (C:)</div></div>
<div style="position:absolute;left:240.0px;top:560px;width:117.0px;height:109px;overflow:hidden"><div class="t" style="left:0;top:32.66px;font-size:17.3px;font-weight:400;">100.00 GB NTFS</div></div>
<div style="position:absolute;left:240.0px;top:560px;width:117.0px;height:109px;overflow:hidden"><div class="t" style="left:0;top:56.66px;font-size:17.3px;font-weight:400;">Healthy (Boot,</div></div>
<div style="position:absolute;left:368.5px;top:533px;width:141.2px;height:142px;background:#f0f0f0"></div>
<div style="position:absolute;left:370.5px;top:534px;width:137.2px;height:21px;background:#000080"></div>
<div style="position:absolute;left:368.5px;top:555px;width:139.2px;height:1.2px;background:#b0b0b0"></div>
<div style="position:absolute;left:507.7px;top:533px;width:1.6px;height:142px;background:#a4a4a4"></div>
<div style="position:absolute;left:509.3px;top:533px;width:1px;height:142px;background:#fcfcfc"></div>
<div style="position:absolute;left:368.5px;top:674px;width:141.2px;height:1.2px;background:#a4a4a4"></div>
<div style="position:absolute;left:375.5px;top:560px;width:128.2px;height:109px;background:#fff"></div>
<div style="position:absolute;left:375.5px;top:560px;width:128.2px;height:1.2px;background:#a8a8a8"></div>
<div style="position:absolute;left:375.5px;top:560px;width:1.2px;height:109px;background:#a8a8a8"></div>
<div style="position:absolute;left:381.0px;top:560px;width:117.19999999999999px;height:109px;overflow:hidden"><div class="t" style="left:0;top:8.66px;font-size:17.3px;font-weight:700;letter-spacing:0.45px;">WORK&nbsp; (D:)</div></div>
<div style="position:absolute;left:381.0px;top:560px;width:117.19999999999999px;height:109px;overflow:hidden"><div class="t" style="left:0;top:32.66px;font-size:17.3px;font-weight:400;">100.00 GB NTFS</div></div>
<div style="position:absolute;left:381.0px;top:560px;width:117.19999999999999px;height:109px;overflow:hidden"><div class="t" style="left:0;top:56.66px;font-size:17.3px;font-weight:400;">Healthy (Basic</div></div>
<div style="position:absolute;left:509.5px;top:533px;width:141.5px;height:142px;background:#f0f0f0"></div>
<div style="position:absolute;left:511.5px;top:534px;width:137.5px;height:21px;background:#000080"></div>
<div style="position:absolute;left:509.5px;top:555px;width:139.5px;height:1.2px;background:#b0b0b0"></div>
<div style="position:absolute;left:649px;top:533px;width:1.6px;height:142px;background:#a4a4a4"></div>
<div style="position:absolute;left:650.6px;top:533px;width:1px;height:142px;background:#fcfcfc"></div>
<div style="position:absolute;left:509.5px;top:674px;width:141.5px;height:1.2px;background:#a4a4a4"></div>
<div style="position:absolute;left:516.5px;top:560px;width:128.5px;height:109px;background:#fff"></div>
<div style="position:absolute;left:516.5px;top:560px;width:128.5px;height:1.2px;background:#a8a8a8"></div>
<div style="position:absolute;left:516.5px;top:560px;width:1.2px;height:109px;background:#a8a8a8"></div>
<div style="position:absolute;left:522.0px;top:560px;width:117.5px;height:109px;overflow:hidden"><div class="t" style="left:0;top:8.66px;font-size:17.3px;font-weight:700;letter-spacing:0.45px;">D-COM&nbsp; (E:)</div></div>
<div style="position:absolute;left:522.0px;top:560px;width:117.5px;height:109px;overflow:hidden"><div class="t" style="left:0;top:32.66px;font-size:17.3px;font-weight:400;">100.00 GB NTFS</div></div>
<div style="position:absolute;left:522.0px;top:560px;width:117.5px;height:109px;overflow:hidden"><div class="t" style="left:0;top:56.66px;font-size:17.3px;font-weight:400;">Healthy (Basic</div></div>
<div style="position:absolute;left:650.5px;top:533px;width:141.5px;height:142px;background:#f0f0f0"></div>
<div style="position:absolute;left:652.5px;top:534px;width:137.5px;height:21px;background:#000080"></div>
<div style="position:absolute;left:650.5px;top:555px;width:139.5px;height:1.2px;background:#b0b0b0"></div>
<div style="position:absolute;left:790px;top:533px;width:1.6px;height:142px;background:#a4a4a4"></div>
<div style="position:absolute;left:791.6px;top:533px;width:1px;height:142px;background:#fcfcfc"></div>
<div style="position:absolute;left:650.5px;top:674px;width:141.5px;height:1.2px;background:#a4a4a4"></div>
<div style="position:absolute;left:657.5px;top:560px;width:128.5px;height:109px;background:#fff"></div>
<div style="position:absolute;left:657.5px;top:560px;width:128.5px;height:1.2px;background:#a8a8a8"></div>
<div style="position:absolute;left:657.5px;top:560px;width:1.2px;height:109px;background:#a8a8a8"></div>
<div style="position:absolute;left:663.0px;top:560px;width:117.5px;height:109px;overflow:hidden"><div class="t" style="left:0;top:8.66px;font-size:17.3px;font-weight:700;letter-spacing:0.45px;">M-COM&nbsp; (F:)</div></div>
<div style="position:absolute;left:663.0px;top:560px;width:117.5px;height:109px;overflow:hidden"><div class="t" style="left:0;top:32.66px;font-size:17.3px;font-weight:400;">100.00 GB NTFS</div></div>
<div style="position:absolute;left:663.0px;top:560px;width:117.5px;height:109px;overflow:hidden"><div class="t" style="left:0;top:56.66px;font-size:17.3px;font-weight:400;">Healthy (Basic</div></div>
<div style="position:absolute;left:791.5px;top:533px;width:136.0px;height:142px;background:#f0f0f0"></div>
<div style="position:absolute;left:793.5px;top:534px;width:132.0px;height:21px;background:#000080"></div>
<div style="position:absolute;left:791.5px;top:555px;width:134.0px;height:1.2px;background:#b0b0b0"></div>
<div style="position:absolute;left:925.5px;top:533px;width:1.6px;height:142px;background:#a4a4a4"></div>
<div style="position:absolute;left:927.1px;top:533px;width:1px;height:142px;background:#fcfcfc"></div>
<div style="position:absolute;left:791.5px;top:674px;width:136.0px;height:1.2px;background:#a4a4a4"></div>
<div style="position:absolute;left:798.5px;top:560px;width:123.0px;height:109px;background:#fff"></div>
<div style="position:absolute;left:798.5px;top:560px;width:123.0px;height:1.2px;background:#a8a8a8"></div>
<div style="position:absolute;left:798.5px;top:560px;width:1.2px;height:109px;background:#a8a8a8"></div>
<div style="position:absolute;left:804.0px;top:560px;width:112.0px;height:109px;overflow:hidden"><div class="t" style="left:0;top:8.66px;font-size:17.3px;font-weight:700;letter-spacing:0.45px;">Donemax&nbsp; (G:)</div></div>
<div style="position:absolute;left:804.0px;top:560px;width:112.0px;height:109px;overflow:hidden"><div class="t" style="left:0;top:32.66px;font-size:17.3px;font-weight:400;">75.69 GB NTFS</div></div>
<div style="position:absolute;left:804.0px;top:560px;width:112.0px;height:109px;overflow:hidden"><div class="t" style="left:0;top:56.66px;font-size:17.3px;font-weight:400;">Healthy (Basic</div></div>
<div style="position:absolute;left:927.7px;top:533px;width:86.79999999999995px;height:142px;background:#f0f0f0"></div>
<div style="position:absolute;left:929.7px;top:534px;width:82.79999999999995px;height:21px;background:#000080"></div>
<div style="position:absolute;left:927.7px;top:555px;width:84.79999999999995px;height:1.2px;background:#b0b0b0"></div>
<div style="position:absolute;left:1012.5px;top:533px;width:1.6px;height:142px;background:#a4a4a4"></div>
<div style="position:absolute;left:1014.1px;top:533px;width:1px;height:142px;background:#fcfcfc"></div>
<div style="position:absolute;left:927.7px;top:674px;width:86.79999999999995px;height:1.2px;background:#a4a4a4"></div>
<div style="position:absolute;left:934.7px;top:560px;width:73.79999999999995px;height:109px;background:#fff"></div>
<div style="position:absolute;left:934.7px;top:560px;width:73.79999999999995px;height:1.2px;background:#a8a8a8"></div>
<div style="position:absolute;left:934.7px;top:560px;width:1.2px;height:109px;background:#a8a8a8"></div>
<div style="position:absolute;left:940.2px;top:560px;width:62.799999999999955px;height:109px;overflow:hidden"><div class="t" style="left:0;top:32.66px;font-size:17.3px;font-weight:400;">1000 MB</div></div>
<div style="position:absolute;left:940.2px;top:560px;width:62.799999999999955px;height:109px;overflow:hidden"><div class="t" style="left:0;top:56.66px;font-size:17.3px;font-weight:400;">Healthy (Recovery Partition)</div></div>
<div style="position:absolute;left:159.5px;top:684px;width:1.5px;height:155px;background:#a8a8a8"></div>
<div style="position:absolute;left:160px;top:838px;width:948px;height:1.2px;background:#a4a4a4"></div>
<div style="position:absolute;left:160px;top:691px;width:253px;height:142px;background:#f0f0f0"></div>
<div style="position:absolute;left:162px;top:692px;width:249px;height:21px;background:#000080"></div>
<div style="position:absolute;left:160px;top:713px;width:251px;height:1.2px;background:#b0b0b0"></div>
<div style="position:absolute;left:411px;top:691px;width:1.6px;height:142px;background:#a4a4a4"></div>
<div style="position:absolute;left:412.6px;top:691px;width:1px;height:142px;background:#fcfcfc"></div>
<div style="position:absolute;left:160px;top:832px;width:253px;height:1.2px;background:#a4a4a4"></div>
<div style="position:absolute;left:167px;top:718px;width:240px;height:109px;background:#fff"></div>
<div style="position:absolute;left:167px;top:718px;width:240px;height:1.2px;background:#a8a8a8"></div>
<div style="position:absolute;left:167px;top:718px;width:1.2px;height:109px;background:#a8a8a8"></div>
<div style="position:absolute;left:172.5px;top:718px;width:229.0px;height:109px;overflow:hidden"><div class="t" style="left:0;top:32.66px;font-size:17.3px;font-weight:400;">200 MB</div></div>
<div style="position:absolute;left:172.5px;top:718px;width:229.0px;height:109px;overflow:hidden"><div class="t" style="left:0;top:56.66px;font-size:17.3px;font-weight:400;">Healthy (EFI System Partition</div></div>
<div style="position:absolute;left:413.5px;top:691px;width:691.5px;height:142px;background:#f0f0f0"></div>
<div style="position:absolute;left:415.5px;top:692px;width:687.5px;height:21px;background:#000080"></div>
<div style="position:absolute;left:413.5px;top:713px;width:689.5px;height:1.2px;background:#b0b0b0"></div>
<div style="position:absolute;left:1103px;top:691px;width:1.6px;height:142px;background:#a4a4a4"></div>
<div style="position:absolute;left:1104.6px;top:691px;width:1px;height:142px;background:#fcfcfc"></div>
<div style="position:absolute;left:413.5px;top:832px;width:691.5px;height:1.2px;background:#a4a4a4"></div>
<div style="position:absolute;left:413.5px;top:713px;width:689.5px;height:119px;background:#b8b8b8"></div>
<div style="position:absolute;left:413.5px;top:713px;width:2.5px;height:119px;background:#a8a8a8"></div>
<div style="position:absolute;left:1101.5px;top:713px;width:1.5px;height:119px;background:#a8a8a8"></div>
<div style="position:absolute;left:413.5px;top:830.5px;width:689.5px;height:1.5px;background:#a8a8a8"></div>
<svg style="position:absolute;left:420.5px;top:718px" width="678.5" height="107.7" viewBox="0 0 678.5 107.7"><defs><pattern id="hp" patternUnits="userSpaceOnUse" width="6" height="6"><rect width="6" height="6" fill="#fff"/><path d="M-1.5 1.5 L1.5 -1.5 M0 6 L6 0 M4.5 7.5 L7.5 4.5" stroke="#c4c4c4" stroke-width="0.95"/></pattern></defs><rect width="678.5" height="107.7" fill="url(#hp)"/></svg>
<div style="position:absolute;left:425.5px;top:718px;width:667.0px;height:109px;overflow:hidden"><div class="t" style="left:0;top:8.66px;font-size:17.3px;font-weight:700;background:#fff;padding:0 6px 0 0;letter-spacing:0.45px;height:23px;padding-top:1px;margin-top:-1px;">New Volume&nbsp; (H:)</div></div>
<div style="position:absolute;left:425.5px;top:718px;width:667.0px;height:109px;overflow:hidden"><div class="t" style="left:0;top:32.66px;font-size:17.3px;font-weight:400;background:#fff;padding:0 6px 0 0;height:23px;padding-top:1px;margin-top:-1px;">1862.82 GB NTFS</div></div>
<div style="position:absolute;left:425.5px;top:718px;width:667.0px;height:109px;overflow:hidden"><div class="t" style="left:0;top:56.66px;font-size:17.3px;font-weight:400;background:#fff;padding:0 6px 0 0;height:23px;padding-top:1px;margin-top:-1px;">Healthy (Basic Data Partition)</div></div>
<div style="position:absolute;left:1115px;top:543px;width:14px;height:182px;background:#858585"></div>
<div style="position:absolute;left:12px;top:840px;width:1122px;height:32px;background:#f0f0f0"></div>
<div style="position:absolute;left:12px;top:841.5px;width:1120px;height:1.5px;background:#fff"></div>
<div style="position:absolute;left:12px;top:870.3px;width:1122px;height:2px;background:#a4a4a4"></div>
<div style="position:absolute;left:1132px;top:841px;width:2px;height:31px;background:#a4a4a4"></div>
<div style="position:absolute;left:19.5px;top:846.5px;width:18px;height:21px;background:#fafafa"></div>
<div style="position:absolute;left:21px;top:848px;width:15px;height:18px;background:#000"></div>
<div class="t" style="left:44.5px;top:850.36px;font-size:17.3px;font-weight:400;color:#000;">Unallocated</div>
<div style="position:absolute;left:145.5px;top:846.5px;width:18px;height:21px;background:#fafafa"></div>
<div style="position:absolute;left:147px;top:848px;width:15px;height:18px;background:#000080"></div>
<div class="t" style="left:170px;top:850.36px;font-size:17.3px;font-weight:400;color:#000;">Primary partition</div>
<div style="position:absolute;left:9px;top:872px;width:1128px;height:35px;background:#f0f0f0;border-radius:0 0 8px 8px"></div>
<div style="position:absolute;left:9px;top:874.5px;width:1128px;height:1.2px;background:#fbfbfb"></div>
<div style="position:absolute;left:533px;top:878px;width:1px;height:29px;background:#dcdcdc"></div>
<div style="position:absolute;left:900px;top:878px;width:1px;height:29px;background:#dcdcdc"></div>
<div style="position:absolute;left:1133px;top:878px;width:1px;height:26px;background:#dcdcdc"></div>
<div style="position:absolute;left:31px;top:684px;width:635px;height:137px;border:3px solid #ff2000;box-sizing:border-box"></div>
</body></html>
